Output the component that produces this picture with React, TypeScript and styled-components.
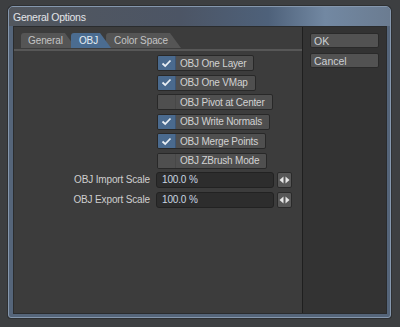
import styled, { createGlobalStyle } from 'styled-components';

const GlobalStyle = createGlobalStyle`
  html, body {
    margin: 0;
    padding: 0;
    background: #3d3f41;
    font-family: "Liberation Sans", Arial, sans-serif;
  }
`;

const Page = styled.div`
  width: 400px;
  height: 327px;
  padding: 6px 0 0 8px;
  box-sizing: border-box;
`;

const Window = styled.div`
  width: 383px;
  height: 312px;
  box-sizing: border-box;
  border: 1px solid #8597ad;
  border-radius: 5px 5px 3px 3px;
  background: #55657a;
  padding: 0 3px 3px 4px;
  display: flex;
  flex-direction: column;
  box-shadow: 0 0 0 1px #2e3032;
`;

const TitleBar = styled.div`
  height: 19px;
  flex: none;
  margin: 0 -3px 0 -4px;
  padding-left: 4px;
  display: flex;
  align-items: center;
  border-radius: 4px 4px 0 0;
  background: linear-gradient(90deg, #52575e 0%, #4c5565 45%, #4e617a 68%, #7288a2 83%, #6b7c91 100%);
  color: #e2e4e8;
  font-size: 10.5px;
  letter-spacing: -0.25px;
`;

const Body = styled.div`
  flex: 1;
  display: flex;
  border: 1px solid #2a2c2e;
  min-height: 0;
`;

const MainPanel = styled.div`
  width: 288px;
  flex: none;
  background: #3c3c3c;
  display: flex;
  flex-direction: column;
`;

const SidePanel = styled.div`
  flex: 1;
  background: #333333;
  border-left: 1px solid #1f1f1f;
  padding: 6px 0 0 7px;
  display: flex;
  flex-direction: column;
  gap: 5px;
`;

const TabBar = styled.div`
  display: flex;
  padding: 6px 0 1px 7px;
  height: 15px;
  border-bottom: 2px solid #575757;
`;

const Tab = styled.div<{ $active?: boolean; $first?: boolean }>`
  position: relative;
  z-index: ${(p) => (p.$active ? 2 : 1)};
  margin-left: ${(p) => (p.$first ? '0' : '-5px')};
  height: 15px;
  padding: 0 13px 0 ${(p) => (p.$first ? '7px' : '8px')};
  display: flex;
  align-items: center;
  font-size: 10px;
  letter-spacing: -0.1px;
  color: ${(p) => (p.$active ? '#e4ecf4' : '#c4c4c4')};
  background: ${(p) => (p.$active ? '#4b6c90' : '#555555')};
  border-radius: 3px 0 0 0;
  clip-path: polygon(0 0, calc(100% - 11px) 0, 100% 100%, 0 100%);
`;

const Checks = styled.div`
  display: flex;
  flex-direction: column;
  align-items: flex-start;
  gap: 3.6px;
  padding: 4px 0 0 143px;
`;

const CheckButton = styled.div`
  height: 16px;
  box-sizing: border-box;
  display: flex;
  border: 1px solid #282828;
  border-radius: 2px;
  overflow: hidden;
  background: #4f4f4f;
`;

const CheckBox = styled.div<{ $on?: boolean }>`
  width: 17px;
  flex: none;
  display: flex;
  align-items: center;
  justify-content: center;
  background: ${(p) => (p.$on ? '#4a6a8e' : '#4f4f4f')};
  border-right: 1px solid ${(p) => (p.$on ? '#3d5573' : '#474747')};
`;

const CheckLabel = styled.div`
  padding: 0 7px 0 4px;
  display: flex;
  align-items: center;
  font-size: 10px;
  letter-spacing: -0.2px;
  color: #d2d2d2;
  white-space: nowrap;
`;

const Fields = styled.div`
  display: flex;
  flex-direction: column;
  gap: 4px;
  padding-top: 3px;
`;

const FieldRow = styled.div`
  display: grid;
  grid-template-columns: 137px 118px 15px;
  column-gap: 5px;
  align-items: center;
  height: 16px;
`;

const FieldLabel = styled.div`
  text-align: right;
  font-size: 10px;
  letter-spacing: -0.15px;
  color: #cfcfcf;
  margin-right: 1px;
`;

const NumberField = styled.div`
  height: 16px;
  box-sizing: border-box;
  border: 1px solid #222222;
  border-radius: 3px;
  background: #2d2d2d;
  padding-left: 5px;
  display: flex;
  align-items: center;
  font-size: 10px;
  letter-spacing: -0.15px;
  color: #c9d5e2;
`;

const Spinner = styled.div`
  height: 16px;
  width: 15px;
  margin-left: -2px;
  box-sizing: border-box;
  border: 1px solid #2a2a2a;
  border-radius: 2px;
  background: #575757;
  display: flex;
  align-items: center;
  justify-content: center;
`;

const SideButton = styled.div`
  width: 69px;
  height: 15px;
  box-sizing: border-box;
  border: 1px solid #2a2a2a;
  border-radius: 2px;
  background: #525252;
  padding-left: 3px;
  display: flex;
  align-items: center;
  font-size: 10.5px;
  color: #cdd0d4;
`;

const Tick = () => (
  <svg width="11" height="9" viewBox="0 0 11 9">
    <path d="M1.5 4.5 L4.2 7 L9.5 1.5" fill="none" stroke="#e8eef4" strokeWidth="1.8" />
  </svg>
);

const Arrows = () => (
  <svg width="11" height="8" viewBox="0 0 11 8">
    <path d="M4.5 0.5 L0.5 4 L4.5 7.5 Z" fill="#e6e6e6" />
    <path d="M6.5 0.5 L10.5 4 L6.5 7.5 Z" fill="#e6e6e6" />
  </svg>
);

const options = [
  { label: 'OBJ One Layer', on: true },
  { label: 'OBJ One VMap', on: true },
  { label: 'OBJ Pivot at Center', on: false },
  { label: 'OBJ Write Normals', on: true },
  { label: 'OBJ Merge Points', on: true },
  { label: 'OBJ ZBrush Mode', on: false },
];

const fields = [
  { label: 'OBJ Import Scale', value: '100.0 %' },
  { label: 'OBJ Export Scale', value: '100.0 %' },
];

const App = () => {
  return (
    <Page>
      <GlobalStyle />
      <Window>
        <TitleBar>General Options</TitleBar>
        <Body>
          <MainPanel>
            <TabBar>
              <Tab $first>General</Tab>
              <Tab $active>OBJ</Tab>
              <Tab>Color Space</Tab>
            </TabBar>
            <Checks>
              {options.map((o) => (
                <CheckButton key={o.label}>
                  <CheckBox $on={o.on}>{o.on && <Tick />}</CheckBox>
                  <CheckLabel>{o.label}</CheckLabel>
                </CheckButton>
              ))}
            </Checks>
            <Fields>
              {fields.map((f) => (
                <FieldRow key={f.label}>
                  <FieldLabel>{f.label}</FieldLabel>
                  <NumberField>{f.value}</NumberField>
                  <Spinner>
                    <Arrows />
                  </Spinner>
                </FieldRow>
              ))}
            </Fields>
          </MainPanel>
          <SidePanel>
            <SideButton>OK</SideButton>
            <SideButton>Cancel</SideButton>
          </SidePanel>
        </Body>
      </Window>
    </Page>
  );
};

export default App;
